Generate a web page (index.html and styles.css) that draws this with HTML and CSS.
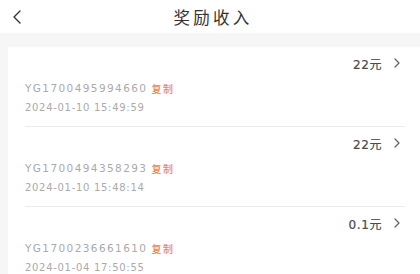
FILE: index.html
```html
<!DOCTYPE html>
<html lang="zh">
<head>
<meta charset="utf-8">
<link rel="stylesheet" href="styles.css">
</head>
<body>
<div class="page">
  <header class="topbar">
    <svg class="back" width="12" height="16" viewBox="0 0 12 16"><path d="M9 2 L3 8 L9 14" fill="none" stroke="#333" stroke-width="1.4" stroke-linecap="round" stroke-linejoin="round"/></svg>
    <h1 class="title">奖励收入</h1>
  </header>
  <main class="content">
    <section class="card">
      <div class="item">
        <div class="amount-row"><span class="amount">22元</span><svg class="arrow" width="8" height="12" viewBox="0 0 8 12"><path d="M2 2 L6 6 L2 10" fill="none" stroke="#666" stroke-width="1.3" stroke-linecap="round" stroke-linejoin="round"/></svg></div>
        <div class="id-row"><span class="order">YG1700495994660</span><span class="copy">复制</span></div>
        <div class="date">2024-01-10 15:49:59</div>
      </div>
      <div class="item">
        <div class="amount-row"><span class="amount">22元</span><svg class="arrow" width="8" height="12" viewBox="0 0 8 12"><path d="M2 2 L6 6 L2 10" fill="none" stroke="#666" stroke-width="1.3" stroke-linecap="round" stroke-linejoin="round"/></svg></div>
        <div class="id-row"><span class="order">YG1700494358293</span><span class="copy">复制</span></div>
        <div class="date">2024-01-10 15:48:14</div>
      </div>
      <div class="item">
        <div class="amount-row"><span class="amount">0.1元</span><svg class="arrow" width="8" height="12" viewBox="0 0 8 12"><path d="M2 2 L6 6 L2 10" fill="none" stroke="#666" stroke-width="1.3" stroke-linecap="round" stroke-linejoin="round"/></svg></div>
        <div class="id-row"><span class="order">YG1700236661610</span><span class="copy">复制</span></div>
        <div class="date">2024-01-04 17:50:55</div>
      </div>
    </section>
  </main>
</div>
</body>
</html>
```
FILE: styles.css
```css
* { box-sizing: border-box; margin: 0; padding: 0; }
html, body { width: 420px; height: 274px; overflow: hidden; background: #f6f6f6; }
body { font-family: "DejaVu Sans", "Noto Sans CJK SC", sans-serif; }
.page { display: flex; flex-direction: column; height: 274px; }
.topbar {
  flex-shrink: 0;
  height: 33px; background: #fff; display: flex; align-items: center;
  justify-content: center; position: relative;
}
.back { position: absolute; left: 11px; top: 9px; }
.title {
  font-family: "Noto Sans CJK SC", sans-serif; font-weight: 400;
  font-size: 16.5px; letter-spacing: 3.2px; color: #333; line-height: 20px;
  padding-left: 6px;
}
.content { padding: 14px 0 0 8px; flex: 1; min-height: 0; }
.card { background: #fff; height: 100%; padding: 0 15px 0 17px; overflow: hidden; }
.item { padding: 8px 0 10px; border-bottom: 1px solid #ececec; }
.amount-row {
  display: flex; justify-content: flex-end; align-items: center;
  height: 16px; padding-right: 4px; gap: 11px;
}
.amount {
  font-family: "DejaVu Sans", "Noto Sans CJK SC", sans-serif;
  font-size: 12px; font-weight: 400; color: #4a4a4a; letter-spacing: 0.6px;
  -webkit-text-stroke: 0.2px #4a4a4a;
}
.arrow { display: block; }
.id-row {
  margin-top: 9px; height: 16px; display: flex; align-items: center; gap: 4px;
}
.order { font-size: 10.5px; color: #aaa; letter-spacing: 1.4px; }
.copy {
  font-family: "Noto Sans CJK SC", sans-serif; font-size: 10px;
  color: #e8884e; letter-spacing: 1.5px; font-weight: 500;
}
.date {
  margin-top: 4px; height: 16px; line-height: 16px;
  font-size: 10px; color: #aaa; letter-spacing: 0.7px;
}
```
